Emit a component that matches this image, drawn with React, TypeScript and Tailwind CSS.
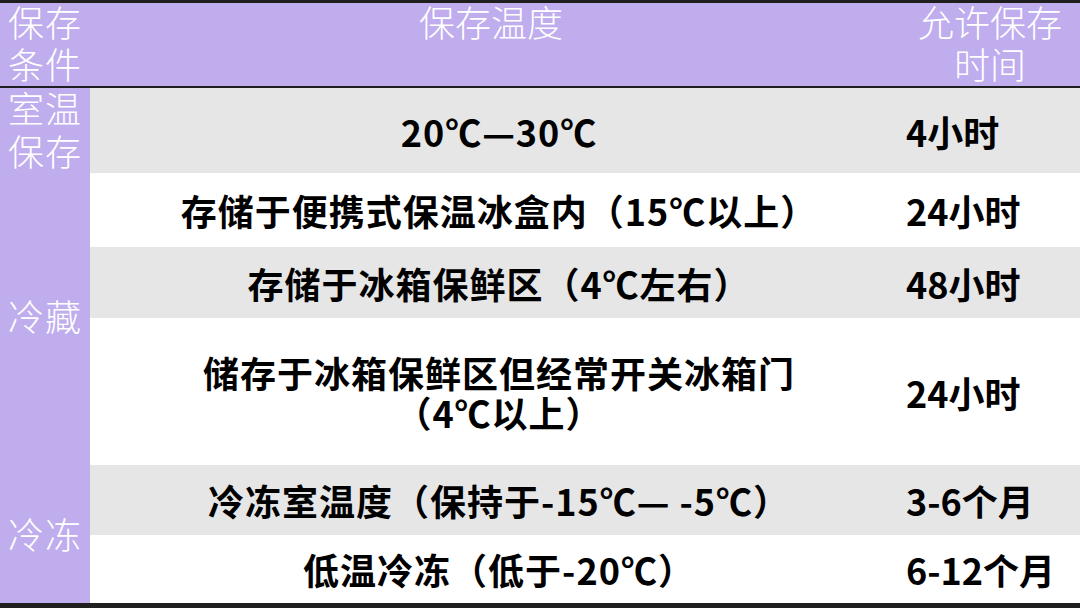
import React from "react";

const FONT = { fontFamily: '"Noto Sans CJK SC", "Noto Sans", sans-serif' };

type Row = { lines: string[]; time: string; gray: boolean };

const rows: Row[] = [
  { lines: ["20℃—30℃"], time: "4小时", gray: true },
  { lines: ["存储于便携式保温冰盒内（15℃以上）"], time: "24小时", gray: false },
  { lines: ["存储于冰箱保鲜区（4℃左右）"], time: "48小时", gray: true },
  { lines: ["储存于冰箱保鲜区但经常开关冰箱门", "（4℃以上）"], time: "24小时", gray: false },
  { lines: ["冷冻室温度（保持于-15℃— -5℃）"], time: "3-6个月", gray: true },
  { lines: ["低温冷冻（低于-20℃）"], time: "6-12个月", gray: false },
];

export default function App() {
  return (
    <div className="w-[1080px] h-[608px] bg-white overflow-hidden" style={FONT}>
      <div className="border-t-[3px] border-[#1f1f1f]">
        {/* header */}
        <div className="grid grid-cols-[90px_802px_188px] h-[83px] bg-[#c0adee] text-white text-[36px] leading-[36px] font-light">
          <div className="pl-[8px] tracking-[1px] flex flex-col gap-[6px]">
            <div>保存</div>
            <div>条件</div>
          </div>
          <div className="text-center">保存温度</div>
          <div className="text-center pl-[8px] flex flex-col gap-[6px]">
            <div>允许保存</div>
            <div>时间</div>
          </div>
        </div>
        <div className="h-[2px] bg-[#1f1f1f]" />
        {/* body */}
        <div className="grid grid-cols-[90px_802px_188px] grid-rows-[85px_74px_71px_147px_70px_68px] text-[36px]">
          <div className="col-start-1 row-start-1 bg-[#c0adee] text-white font-light leading-[36px] pl-[8px] pt-[1px] tracking-[1px] flex flex-col gap-[7px]">
            <div>室温</div>
            <div>保存</div>
          </div>
          <div className="col-start-1 row-start-2 row-span-3 bg-[#c0adee] text-white font-light leading-[42px] pl-[8px] pb-[8px] tracking-[1px] flex items-center">
            冷藏
          </div>
          <div className="col-start-1 row-start-5 row-span-2 bg-[#c0adee] text-white font-light leading-[42px] pl-[8px] pb-[2px] tracking-[1px] flex items-center">
            冷冻
          </div>
          {rows.map((r, i) => (
            <React.Fragment key={i}>
              <div
                className={`col-start-2 flex flex-col items-center justify-center pl-[16px] font-bold text-black leading-[40px] tracking-[1px] ${
                  r.gray ? "bg-[#e6e6e6]" : "bg-white"
                }`}
                style={{ gridRowStart: i + 1 }}
              >
                {r.lines.map((l, j) => (
                  <div key={j}>{l}</div>
                ))}
              </div>
              <div
                className={`col-start-3 flex items-center pl-[14px] font-bold text-black leading-[40px] ${
                  r.gray ? "bg-[#e6e6e6]" : "bg-white"
                }`}
                style={{ gridRowStart: i + 1 }}
              >
                {r.time}
              </div>
            </React.Fragment>
          ))}
        </div>
        <div className="h-[5px] bg-[#1f1f1f]" />
      </div>
    </div>
  );
}
